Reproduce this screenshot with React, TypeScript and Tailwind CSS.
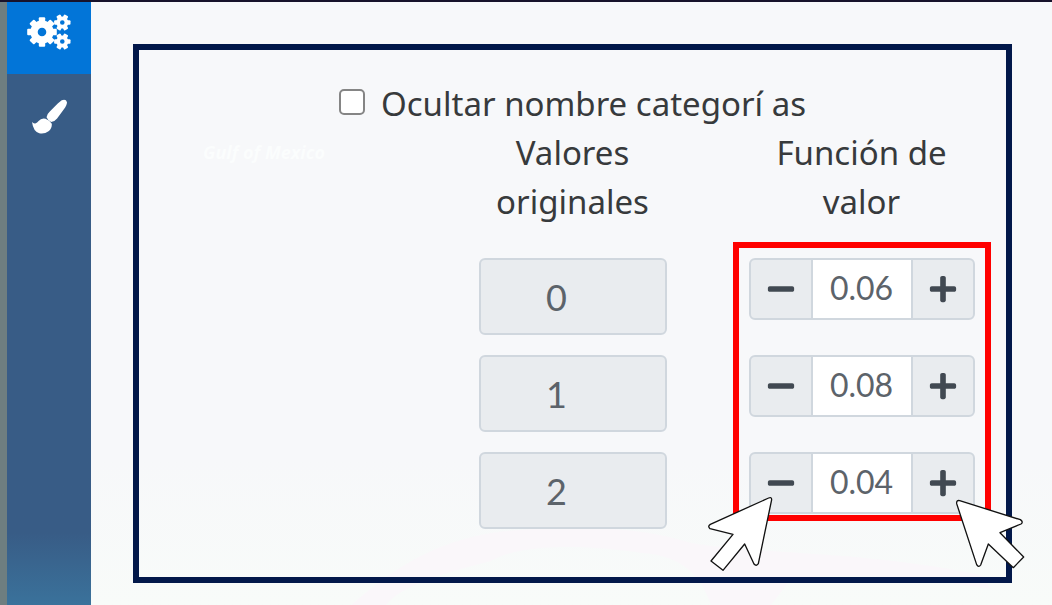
import { useState } from "react";
import { FaMinus, FaPlus } from "react-icons/fa";

type Category = { original: string; value: number };

const initialCategories: Category[] = [
  { original: "0", value: 6 },
  { original: "1", value: 8 },
  { original: "2", value: 4 },
];

type GearProps = {
  cx: number;
  cy: number;
  outer: number;
  body: number;
  hole: number;
  teeth: number;
  toothWidth: number;
};

function Gear({ cx, cy, outer, body, hole, teeth, toothWidth }: GearProps) {
  return (
    <g transform={`translate(${cx} ${cy})`}>
      <circle r={(body + hole) / 2} fill="none" stroke="currentColor" strokeWidth={body - hole} />
      {Array.from({ length: teeth }, (_, i) => (
        <rect
          key={i}
          x={hole + 1}
          y={-toothWidth / 2}
          width={outer - hole - 1}
          height={toothWidth}
          rx={1}
          fill="currentColor"
          transform={`rotate(${(360 / teeth) * i})`}
        />
      ))}
    </g>
  );
}

function GearsIcon() {
  return (
    <svg aria-hidden="true" className="h-9 w-11" viewBox="26 14 44 36">
      <Gear cx={41} cy={32} outer={14.8} body={11.6} hole={4.3} teeth={8} toothWidth={6.4} />
      <Gear cx={61.3} cy={22.5} outer={8.2} body={6} hole={2.3} teeth={6} toothWidth={4.6} />
      <Gear cx={61.3} cy={41.5} outer={8.2} body={6} hole={2.3} teeth={6} toothWidth={4.6} />
    </svg>
  );
}

function BrushIcon() {
  return (
    <svg
      aria-hidden="true"
      className="h-[35px] w-[35px]"
      viewBox="30 24 106 104"
      fill="currentColor"
    >
      <path d="M120 27Q133 22 136 33Q136 42 126 55L106 82Q98 92 88 93Q78 88 74 78Q76 68 84 61L108 37Z" />
      <path d="M71 83Q84 87 90 98Q91 112 80 121Q68 130 52 127Q34 122 30 93Q34 98 40 97Q46 96 50 90Q58 80 71 83Z" />
    </svg>
  );
}

function Sidebar() {
  return (
    <nav
      aria-label="Herramientas"
      className="flex w-[91px] shrink-0 flex-col border-l-[7px] border-[#6e7e80] bg-linear-to-b from-[#385c86] from-88% to-[#3a729b]"
    >
      <button
        type="button"
        aria-label="Configuración"
        className="flex h-[72px] items-start justify-center bg-[#0275d8] pt-3 text-white"
      >
        <GearsIcon />
      </button>
      <button
        type="button"
        aria-label="Estilo"
        className="flex h-[84px] items-center justify-center text-white"
      >
        <BrushIcon />
      </button>
    </nav>
  );
}

function MapBackdrop() {
  return (
    <div aria-hidden="true" className="pointer-events-none absolute inset-0 overflow-hidden">
      <div className="absolute inset-x-0 bottom-0 h-36 bg-linear-to-b from-[#f7f8fa] to-[#f8fbf9]" />
      <svg
        className="absolute bottom-0 left-[250px] h-20 w-[650px]"
        viewBox="0 0 650 80"
        fill="none"
      >
        <path
          d="M10 80C40 55 80 20 150 8C230-2 300 2 350 18C420 30 520 25 640 50L650 64C560 50 500 48 450 54L430 80L370 80C360 50 340 30 300 28C250 20 180 18 150 36C110 46 60 60 45 80Z"
          fill="#faf7fa"
        />
      </svg>
      <span className="absolute top-[136px] left-[112px] font-['Open_Sans',sans-serif] text-lg font-bold text-[#fbfdfd] italic">
        Gulf of Mexico
      </span>
    </div>
  );
}

type StepperProps = {
  label: string;
  value: number;
  onChange: (value: number) => void;
};

function Stepper({ label, value, onChange }: StepperProps) {
  return (
    <div className="flex h-[62px] w-full overflow-hidden rounded-md border-2 border-[#d0d7de] bg-[#e9ecef] text-[#414952]">
      <button
        type="button"
        aria-label={`Disminuir ${label}`}
        onClick={() => onChange(value - 1)}
        className="flex w-15 items-center justify-center"
      >
        <FaMinus className="h-[30px] w-[30px]" />
      </button>
      <input
        aria-label={label}
        value={(value / 100).toFixed(2)}
        readOnly
        className="min-w-0 flex-1 border-x-2 border-[#d0d7de] bg-white pb-1 text-center font-['Lato',sans-serif] text-[32px] text-[#5c636a] outline-none"
      />
      <button
        type="button"
        aria-label={`Aumentar ${label}`}
        onClick={() => onChange(value + 1)}
        className="flex w-15 items-center justify-center"
      >
        <FaPlus className="h-[30px] w-[30px]" />
      </button>
    </div>
  );
}

function Highlight() {
  return (
    <div
      aria-hidden="true"
      className="pointer-events-none absolute -inset-x-4 -top-4 bottom-2"
    >
      <div className="h-full border-6 border-[#ff0000]" />
      <svg
        className="absolute -bottom-[51px] -left-[26px] h-[76px] w-[66px]"
        viewBox="48 168 198 228"
        fill="#fff"
        stroke="#111"
        strokeWidth="4"
        strokeLinejoin="round"
      >
        <path d="M233 174L58 253Q49 259 57 266L126 283L60 363L96 391L161 312L189 372Q196 380 202 371L242 179Q242 170 233 174Z" />
      </svg>
      <svg
        className="absolute -right-[34px] -bottom-[48px] h-[70px] w-[70px]"
        viewBox="795 177 210 210"
        fill="#fff"
        stroke="#111"
        strokeWidth="4"
        strokeLinejoin="round"
      >
        <path d="M809 182L991 239Q1001 246 993 252L930 278L1001 351L970 383L895 312L872 375Q866 384 860 374L800 191Q799 179 809 182Z" />
      </svg>
    </div>
  );
}

export default function App() {
  const [categories, setCategories] = useState(initialCategories);
  const [hideNames, setHideNames] = useState(false);

  const setValue = (index: number, value: number) =>
    setCategories(categories.map((c, i) => (i === index ? { ...c, value } : c)));

  return (
    <div className="flex min-h-screen flex-col border-t-2 border-[#17122b] bg-[#f7f8fa] font-['Noto_Sans',sans-serif] text-[#373a3c]">
      <div className="flex flex-1">
        <Sidebar />
        <main className="relative flex flex-1 flex-col pt-[42px] pr-10 pb-[22px] pl-[42px]">
          <MapBackdrop />
          <section className="relative flex-1 border-6 border-[#02184a] pt-[29px] text-[33px] leading-[49px]">
            <label className="flex items-center justify-center gap-4">
              <input
                type="checkbox"
                checked={hideNames}
                onChange={(e) => setHideNames(e.target.checked)}
                className="mb-1 h-[26px] w-[26px] appearance-none rounded-[5px] border-2 border-[#858585] bg-white checked:bg-[#0275d8]"
              />
              Ocultar nombre categorí as
            </label>
            <div className="grid grid-cols-3">
              <div className="col-start-2 flex flex-col items-center gap-8">
                <h2 className="w-[188px] text-center">Valores originales</h2>
                <div className="flex w-[188px] flex-col gap-5">
                  {categories.map((c) => (
                    <input
                      key={c.original}
                      aria-label={`Valor original ${c.original}`}
                      value={c.original}
                      readOnly
                      className="h-[77px] w-full rounded-md border-2 border-[#d0d7de] bg-[#e9ecef] pr-8 text-center font-['Lato',sans-serif] text-4xl text-[#5c636a] outline-none"
                    />
                  ))}
                </div>
              </div>
              <div className="flex flex-col items-center gap-8">
                <h2 className="w-[226px] text-center">Función de valor</h2>
                <div className="relative flex w-[226px] flex-col gap-5">
                  {categories.map((c, i) => (
                    <div key={c.original} className="h-[77px]">
                      <Stepper
                        label={`Función de valor ${c.original}`}
                        value={c.value}
                        onChange={(value) => setValue(i, value)}
                      />
                    </div>
                  ))}
                  <Highlight />
                </div>
              </div>
            </div>
          </section>
        </main>
      </div>
    </div>
  );
}
